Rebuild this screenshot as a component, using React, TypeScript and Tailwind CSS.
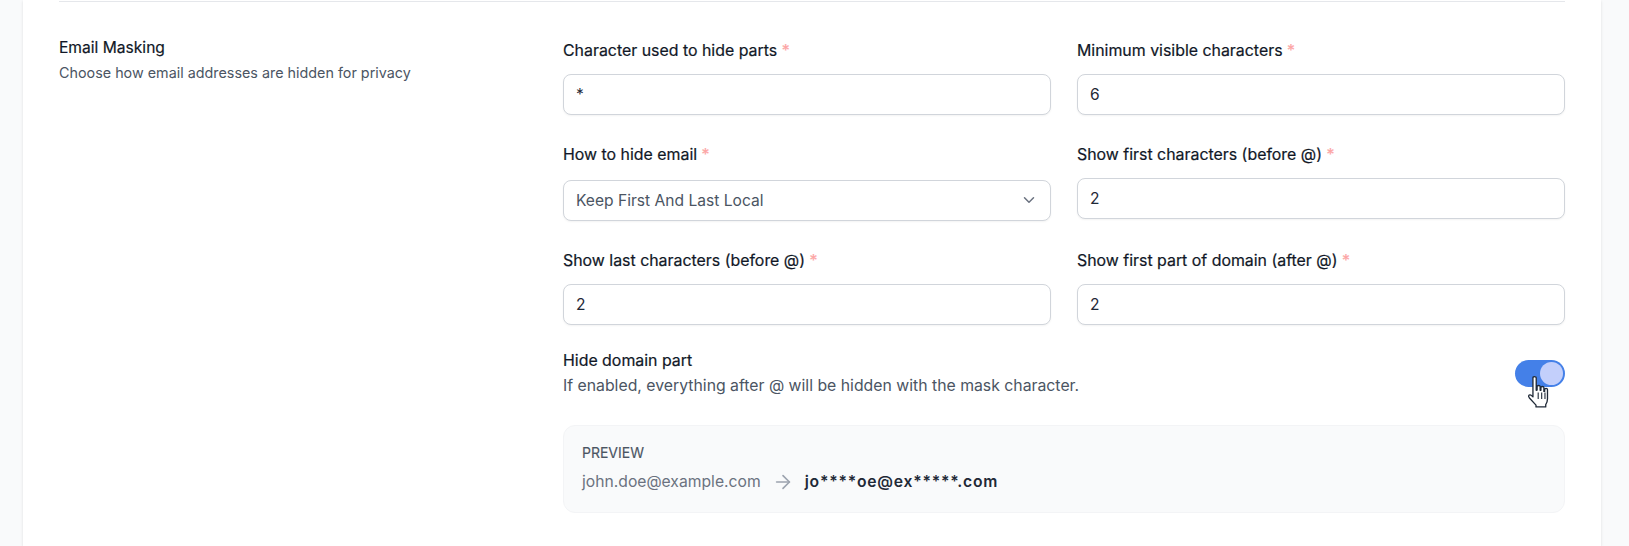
import React from 'react';
import { ArrowRight, ChevronDown } from 'lucide-react';

const Field = ({ label, value, select }: { label: string; value: string; select?: boolean }) => (
  <div>
    <label className="block text-[15.9px] leading-5 font-normal [-webkit-text-stroke:0.2px] text-[#111827]">
      {label} <span className="text-[#fca5a5]">*</span>
    </label>
    {select ? (
      <div className="mt-[15px] h-[40.5px] flex items-center justify-between rounded-lg border border-[#d1d5db] bg-white pl-[12px] pr-[12px] text-[15.6px] text-[#4b5563] shadow-xs">
        <span>{value}</span>
        <ChevronDown size={18} className="text-[#6b7280]" />
      </div>
    ) : (
      <div className="mt-[13px] h-[40.5px] flex items-center rounded-lg border border-[#d1d5db] bg-white pl-[12px] text-[15.6px] text-[#1f2937] shadow-xs">
        {value}
      </div>
    )}
  </div>
);

const HandCursor = () => (
  <svg className="absolute left-[11px] top-[15px]" width="27" height="35" viewBox="0 0 24 32">
    <path
      d="M6 2.5c0-1.4 3-1.4 3 0V14l.8-.2V10.5c0-1.2 2.8-1.2 2.8 0V14l.7 0v-2.6c0-1.2 2.7-1.2 2.7 0V15l.7 0v-1.8c0-1.2 2.6-1.2 2.6 0V22c0 2-.6 3.5-1.6 5v2.2H8.8V27.5L2.8 21c-1.6-1.8-.4-3.5 1.4-2.6L6 20z"
      fill="#fff"
      stroke="#1f2937"
      strokeWidth="1.2"
      strokeLinejoin="round"
    />
    <path d="M10.8 16v6M14 16v6M17 16v6" stroke="#1f2937" strokeWidth="1" />
  </svg>
);

export default function App() {
  return (
    <div className="h-[546px] overflow-hidden bg-[#f9fafb] pl-[23px] pr-[28px] font-['Inter',sans-serif]">
      <div className="h-full bg-white px-[36px] pt-px shadow-sm">
        <div className="border-t border-[#e5e7eb]" />
        <div className="grid grid-cols-[504px_1fr] pt-[39px]">
          <div>
            <h3 className="-mt-[3px] text-[15.6px] leading-5 font-normal [-webkit-text-stroke:0.2px] text-[#111827]">Email Masking</h3>
            <p className="mt-[5px] text-[14.35px] leading-5 text-[#4b5563]">Choose how email addresses are hidden for privacy</p>
          </div>

          <div>
            <div className="grid grid-cols-2 gap-x-[26px] gap-y-[30.5px]">
              <Field label="Character used to hide parts" value="*" />
              <Field label="Minimum visible characters" value="6" />
              <Field label="How to hide email" value="Keep First And Last Local" select />
              <Field label="Show first characters (before @)" value="2" />
              <Field label="Show last characters (before @)" value="2" />
              <Field label="Show first part of domain (after @)" value="2" />
            </div>

            <div className="mt-[26px] flex items-center justify-between">
              <div>
                <p className="text-[15.9px] leading-5 font-normal [-webkit-text-stroke:0.2px] text-[#111827]">Hide domain part</p>
                <p className="mt-[5px] text-[15.8px] leading-5 text-[#4b5563]">If enabled, everything after @ will be hidden with the mask character.</p>
              </div>
              <div className="relative mt-px h-[27px] w-[50px]">
                <div className="h-full w-full rounded-full bg-[#4480e8] p-[2px] flex justify-end">
                  <span className="block h-[23px] w-[23px] rounded-full bg-[#c3cffb]" />
                </div>
                <HandCursor />
              </div>
            </div>

            <div className="mt-[29px] h-[88px] rounded-xl border border-[#f3f4f6] bg-[#f9fafb] px-[18px] pt-[17px]">
              <p className="text-[14px] leading-5 font-normal [-webkit-text-stroke:0.15px] text-[#4b5563]">PREVIEW</p>
              <div className="mt-[8px] flex items-center text-[15.7px] leading-5">
                <span className="text-[#6b7280]">john.doe@example.com</span>
                <ArrowRight size={22} strokeWidth={1.75} className="mx-[11px] text-[#9ca3af]" />
                <span className="font-semibold tracking-wider text-[#1f2937]">jo****oe@ex*****.com</span>
              </div>
            </div>
          </div>
        </div>
      </div>
    </div>
  );
}
